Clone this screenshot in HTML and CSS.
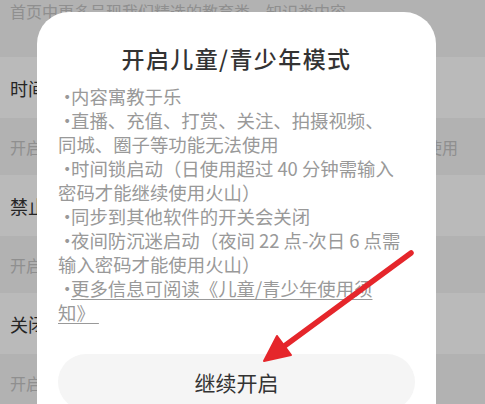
FILE: index.html
```html
<!DOCTYPE html>
<html lang="zh-CN">
<head>
<meta charset="utf-8">
<title>开启儿童/青少年模式</title>
<link rel="stylesheet" href="styles.css">
</head>
<body>
<div class="page">
  <div class="settings">
    <div class="row row-desc row-first"><span class="desc">首页中更多呈现我们精选的教育类、知识类内容</span></div>
    <div class="row row-title"><span class="label">时间锁</span></div>
    <div class="row row-desc"><span class="desc">开启后，单日使用时长超过设定时间需要输入密码才能继续使用</span></div>
    <div class="row row-title"><span class="label">禁止直播</span></div>
    <div class="row row-desc"><span class="desc">开启后，无法观看和进行直播</span></div>
    <div class="row row-title"><span class="label">关闭充值</span></div>
    <div class="row row-desc"><span class="desc">开启后，无法进行充值和打赏</span></div>
    <div class="row row-title"></div>
  </div>
  <div class="mask"></div>
  <div class="dialog">
    <h1 class="dialog-title">开启儿童/青少年模式</h1>
    <div class="dialog-body">
      <p class="line"><span class="dot">·</span>内容寓教于乐</p>
      <p class="line"><span class="dot">·</span>直播、充值、打赏、关注、拍摄视频、</p>
      <p class="line">同城、圈子等功能无法使用</p>
      <p class="line"><span class="dot">·</span>时间锁启动（日使用超过 40 分钟需输入</p>
      <p class="line">密码才能继续使用火山）</p>
      <p class="line"><span class="dot">·</span>同步到其他软件的开关会关闭</p>
      <p class="line"><span class="dot">·</span>夜间防沉迷启动（夜间 22 点-次日 6 点需</p>
      <p class="line">输入密码才能使用火山）</p>
      <p class="line"><a class="link" href="#"><span class="dot">·</span>更多信息可阅读《儿童/青少年使用须</a></p>
      <p class="line"><a class="link" href="#">知》&nbsp;</a></p>
    </div>
    <button class="primary">继续开启</button>
  </div>
  <svg class="arrow" width="485" height="404" viewBox="0 0 485 404">
    <line x1="411" y1="253" x2="279" y2="350" stroke="#e5262b" stroke-width="5.5" stroke-linecap="round"/>
    <polygon points="264,361 277,336 291,355" fill="#e5262b" stroke="#e5262b" stroke-width="2" stroke-linejoin="round"/>
  </svg>
</div>
</body>
</html>
```

FILE: styles.css
```css
html, body {
  margin: 0;
  padding: 0;
}
body {
  font-family: "Noto Sans CJK SC", "Noto Sans", sans-serif;
  background: #fff;
}
.page {
  position: relative;
  width: 485px;
  height: 404px;
  overflow: hidden;
}
.settings {
  display: flex;
  flex-direction: column;
}
.row {
  display: flex;
  align-items: center;
  padding: 0 10px;
  white-space: nowrap;
  flex-shrink: 0;
}
.row-first {
  height: 42px;
  align-items: flex-start;
}
.row-first .desc {
  margin-top: -3px;
}
.row-title {
  height: 61px;
  background: #fff;
}
.row-desc {
  height: 57px;
  background: #f4f4f4;
}
.label {
  font-size: 18px;
  color: #333;
}
.desc {
  font-size: 16px;
  line-height: 28px;
  color: #c4c4c4;
}
.mask {
  position: absolute;
  inset: 0;
  background: rgba(0, 0, 0, 0.27);
}
.dialog {
  position: absolute;
  left: 37px;
  top: 12px;
  width: 399px;
  height: 440px;
  background: #fff;
  border-radius: 32px;
  box-sizing: border-box;
  padding: 30px 21px 0;
  display: flex;
  flex-direction: column;
}
.dialog-title {
  margin: 0;
  text-align: center;
  font-size: 23px;
  line-height: 32px;
  font-weight: 500;
  letter-spacing: 1.4px;
  color: #333;
}
.dialog-body {
  margin-top: 10px;
  padding: 0 2px 0 2px;
}
.line {
  margin: 0 0 0 -2px;
  font-size: 18.4px;
  line-height: 24px;
  color: #999;
  white-space: nowrap;
}
.dot {
  display: inline-block;
  width: 13px;
  text-align: left;
}
.link {
  color: #999;
  text-decoration: underline;
  text-underline-offset: 3px;
  text-decoration-thickness: 1px;
}
.primary {
  margin-top: 30px;
  height: 56px;
  border: none;
  border-radius: 28px;
  background: #f5f5f5;
  font-family: inherit;
  font-size: 21px;
  color: #333;
  flex-shrink: 0;
}
.arrow {
  position: absolute;
  left: 0;
  top: 0;
}
```
